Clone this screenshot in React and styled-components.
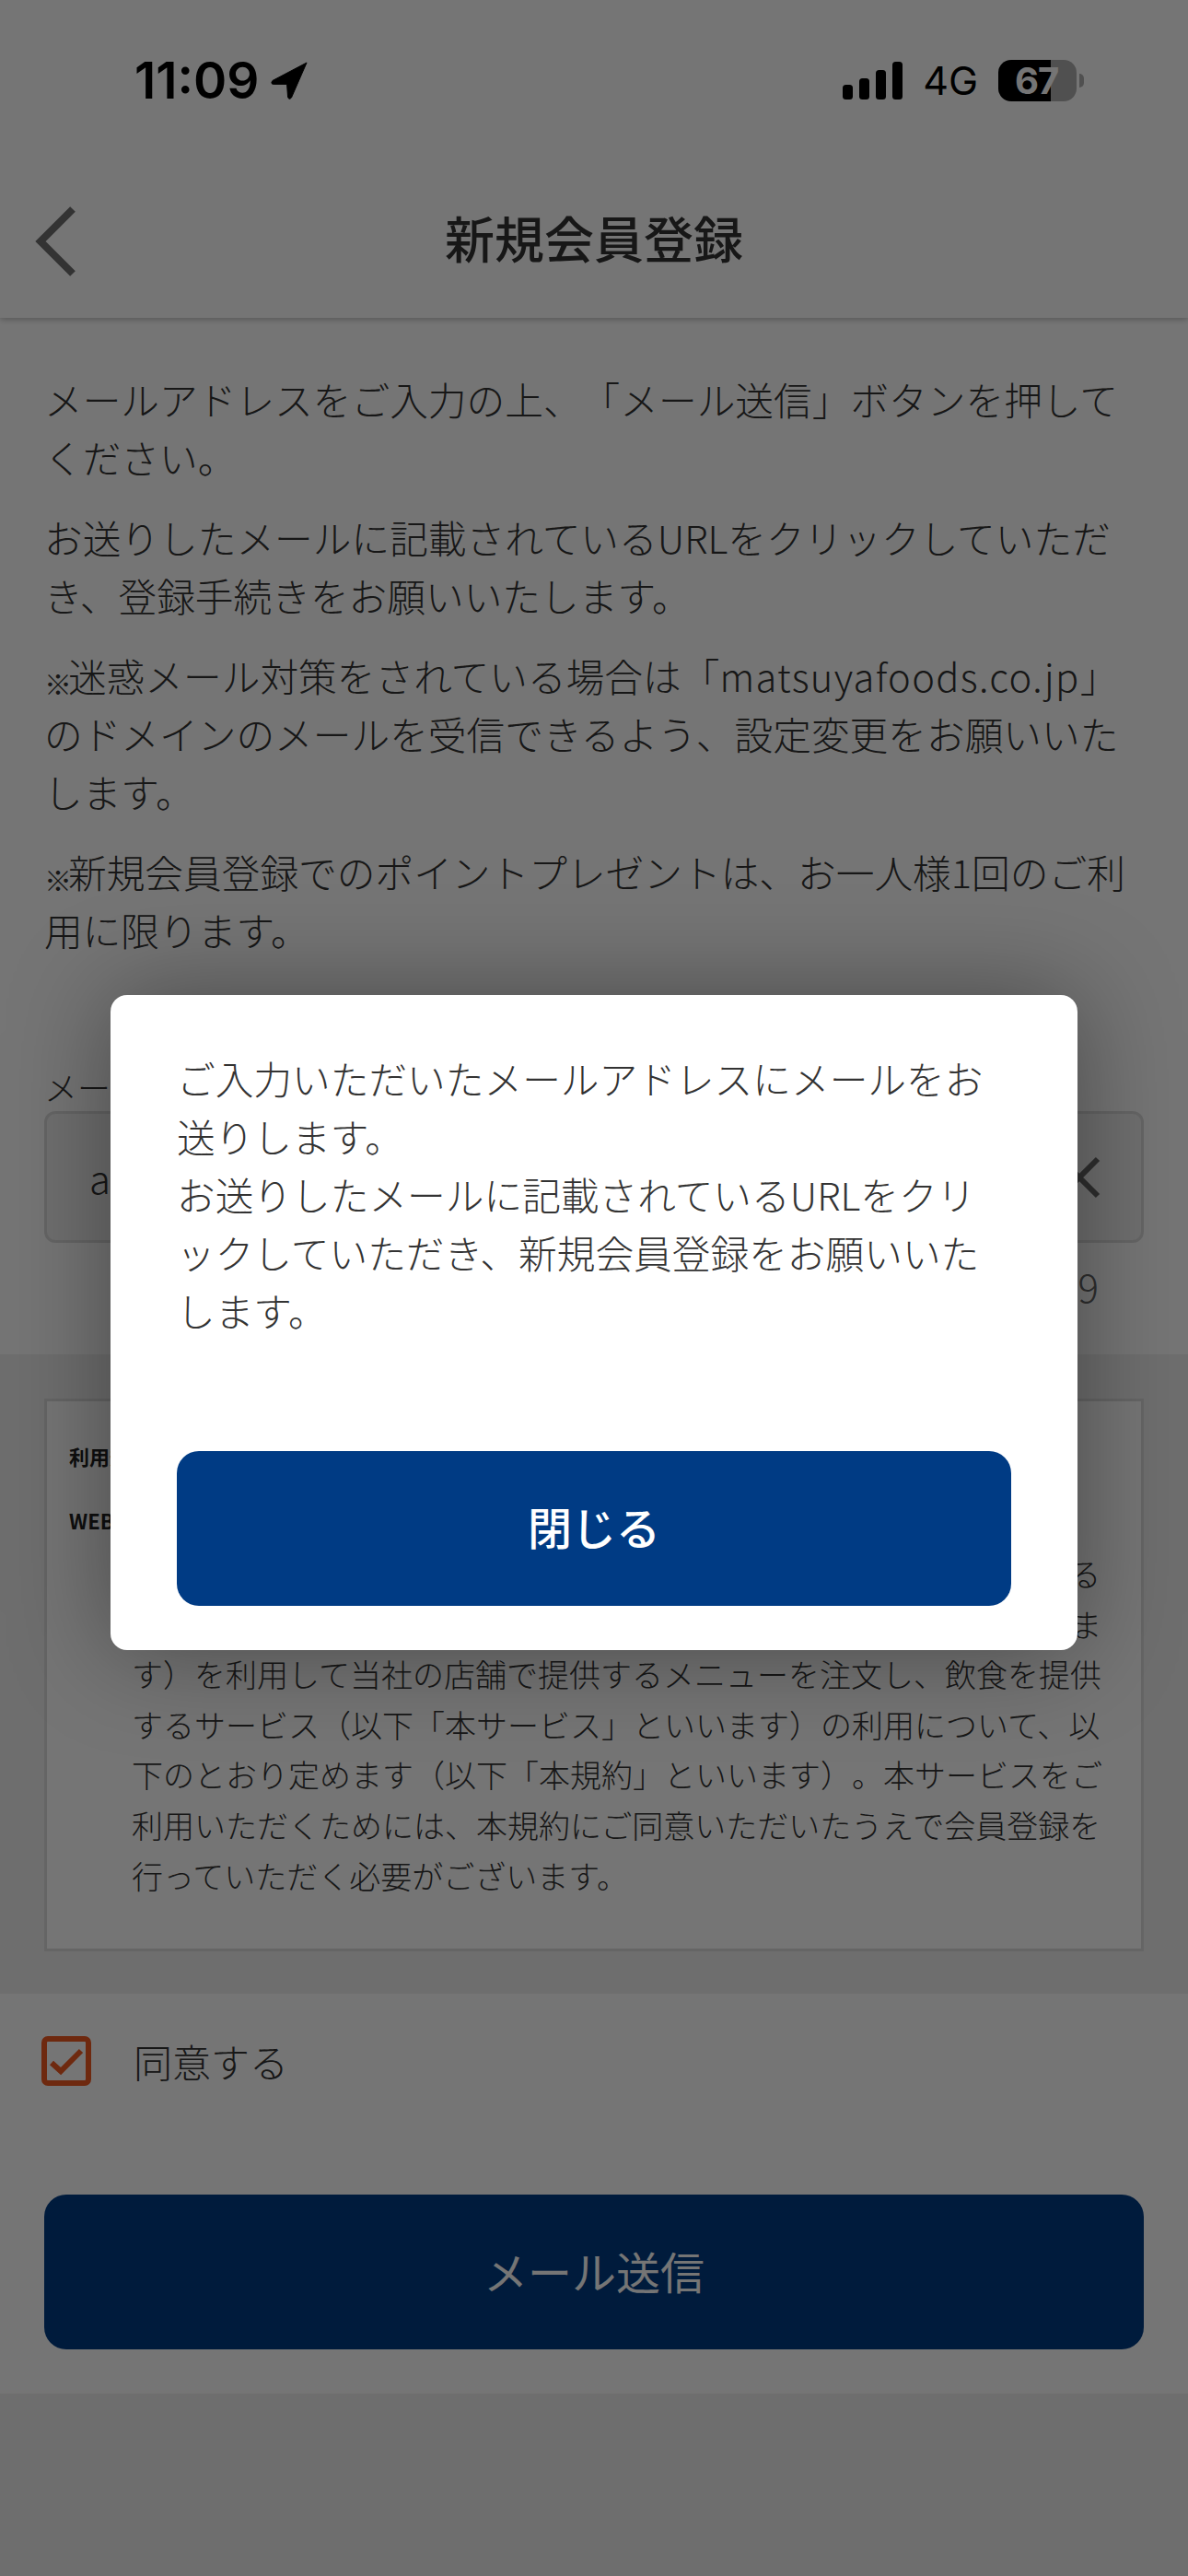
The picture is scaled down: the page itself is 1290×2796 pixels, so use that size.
import React from "react";
import styled, { createGlobalStyle } from "styled-components";

const Global = createGlobalStyle`
  html, body { margin: 0; padding: 0; background: #fff; }
  * { box-sizing: border-box; }
  body { font-family: "Noto Sans CJK JP", "Noto Sans", sans-serif; color: #333; text-spacing-trim: space-all; font-weight: 300; }
`;
const Page = styled.div`position: relative; width: 1290px; height: 2796px; overflow: hidden; background: #fff; display: flex; flex-direction: column;`;
const Head = styled.header`height: 345px; flex: none; padding: 0 40px; display: flex; flex-direction: column; box-shadow: 0 2px 6px rgba(0,0,0,.25); position: relative; background: #fff;`;
const StatusBar = styled.div`height: 172px; padding: 46px 81px 0 106px; display: flex; justify-content: space-between; align-items: flex-start; color: #000;`;
const Time = styled.div`display: flex; align-items: center; gap: 12px; font: 600 55px/82px Inter, "Liberation Sans", sans-serif; letter-spacing: 0;`;
const Indicators = styled.div`display: flex; align-items: center; gap: 22px; height: 82px;`;
const Net = styled.span`font: 400 43px/1 Inter, "Liberation Sans", sans-serif;`;
const Battery = styled.div`position: relative; width: 85px; height: 45px; border-radius: 14px; background: linear-gradient(90deg, #000 0 67%, #aeaeae 67%); font: 700 40px/45px Inter, "Liberation Sans", sans-serif; color: #fff; padding-left: 18px; letter-spacing: -1px;
  &::after { content: ""; position: absolute; left: 88px; top: 15px; width: 5px; height: 15px; border-radius: 0 5px 5px 0; background: #aeaeae; }`;
const NavBar = styled.div`position: relative; display: flex; justify-content: center; padding-top: 45px;`;
const Title = styled.h1`margin: 0; font-size: 54px; line-height: 82px; font-weight: 500; color: #333;`;
const BackIcon = styled.svg`position: absolute; left: -2px; top: 52px;`;
const Intro = styled.section`padding: 57px 48px 0; height: 1125px; flex: none; background: #fff;`;
const Para = styled.p`margin: 0 0 24px; font-size: 41.7px; line-height: 63px; color: #333;`;
const Mark = styled.span`display: inline-block; width: 26px; font-size: 30px; line-height: 1; font-weight: 500; vertical-align: -3px; white-space: nowrap;`;
const Domain = styled.span`letter-spacing: 1.35px;`;
const Label = styled.div`margin-top: 111px; font-size: 36px; line-height: 54px;`;
const Field = styled.div`height: 143px; border: 3px solid #ddd; border-radius: 12px; background: #f1f1f1; padding: 0 44px 0 46px; display: flex; align-items: center; justify-content: space-between; font-size: 42px;`;
const Counter = styled.div`margin-top: 20px; padding-right: 49px; text-align: right; font-size: 42px; line-height: 54px; color: #666;`;
const Terms = styled.section`height: 694px; flex: none; background: #f0f0f0; padding: 48px 48px 46px;`;
const TermsBox = styled.div`height: 600px; border: 3px solid #ddd; background: #fff; padding: 44px 24px 0;`;
const TermsTitle = styled.div`font-size: 22px; line-height: 30px; font-weight: 700; color: #222;`;
const TermsSub = styled(TermsTitle)`margin-top: 40px; margin-bottom: 16px;`;
const TermsBody = styled.div`margin-left: 68px; width: 1060px; font-size: 34px; line-height: 54.6px; color: #333; white-space: pre;`;
const Agree = styled.label`height: 218px; padding: 46px 45px 0; display: flex; align-items: flex-start; gap: 46px; font-size: 42px; line-height: 54px;`;
const Bottom = styled.div`padding: 0 48px; height: 216px;`;
const Submit = styled.div`height: 168px; border-radius: 24px; background: #003b84; display: flex; align-items: center; justify-content: center; color: #fff; font-size: 48px; font-weight: 400; padding-bottom: 5px;`;
const Footer = styled.div`flex: 1; background: #f0f0f0;`;
const Dim = styled.div`position: absolute; inset: 0; background: rgba(0,0,0,.54);`;
const Modal = styled.div`position: absolute; left: 120px; top: 1080px; width: 1050px; height: 711px; background: #fff; border-radius: 18px; padding: 59px 72px 48px; box-shadow: 0 0 110px rgba(0,0,0,.38); display: flex; flex-direction: column; justify-content: space-between;`;
const ModalText = styled.p`margin: 0; font-size: 41.7px; line-height: 63px; color: #333;`;
const CloseBtn = styled.div`height: 168px; border-radius: 24px; background: #003b84; color: #fff; font-size: 48px; font-weight: 500; display: flex; align-items: center; justify-content: center; padding-bottom: 6px;`;

export default function App() {
  return (
    <Page>
      <Global />
      <Head>
        <StatusBar>
          <Time>11:09
            <svg width="41" height="41" viewBox="0 0 42 42"><path d="M40 1 L2 21 Q-1 25 4 25 L18 25 L19 39 Q20 43 23 40 Z" fill="#000" stroke="#000" strokeWidth="1" strokeLinejoin="round"/></svg>
          </Time>
          <Indicators>
            <svg width="65" height="41" viewBox="0 0 65 41"><rect x="0" y="25" width="11" height="16" rx="3.5"/><rect x="18" y="18" width="11" height="23" rx="3.5"/><rect x="36" y="9" width="11" height="32" rx="3.5"/><rect x="54" y="0" width="11" height="41" rx="3.5"/></svg>
            <Net>4G</Net>
            <Battery>67</Battery>
          </Indicators>
        </StatusBar>
        <NavBar>
          <BackIcon width="46" height="76" viewBox="0 0 46 76"><path d="M41 3 L6 38 L41 73" fill="none" stroke="#6f6f6f" strokeWidth="8"/></BackIcon>
          <Title>新規会員登録</Title>
        </NavBar>
      </Head>
      <Intro>
        <Para>メールアドレスをご入力の上、「メール送信」ボタンを押してください。</Para>
        <Para>お送りしたメールに記載されているURLをクリックしていただき、登録手続きをお願いいたします。</Para>
        <Para><Mark>※</Mark>迷惑メール対策をされている場合は「<Domain>matsuyafoods.co.jp</Domain>」のドメインのメールを受信できるよう、設定変更をお願いいたします。</Para>
        <Para><Mark>※</Mark>新規会員登録でのポイントプレゼントは、お一人様1回のご利用に限ります。</Para>
        <Label>メールアドレス</Label>
        <Field><span>a@example.com</span><svg width="46" height="46" viewBox="0 0 46 46"><path d="M3 3 L43 43 M43 3 L3 43" fill="none" stroke="#666" strokeWidth="6"/></svg></Field>
        <Counter>13/2559</Counter>
      </Intro>
      <Terms>
        <TermsBox>
          <TermsTitle>利用規約</TermsTitle>
          <TermsSub>WEBオーダーサービス利用規約</TermsSub>
          <TermsBody>{`松屋フーズ株式会社（以下「当社」といいます）は、当社が提供する
当社ウェブサイト上のオーダーサービス（以下「本アプリ」といいま
す）を利用して当社の店舗で提供するメニューを注文し、飲食を提供
するサービス（以下「本サービス」といいます）の利用について、以
下のとおり定めます（以下「本規約」といいます）。本サービスをご
利用いただくためには、本規約にご同意いただいたうえで会員登録を
行っていただく必要がございます。`}</TermsBody>
        </TermsBox>
      </Terms>
      <Agree>
        <svg width="54" height="54" viewBox="0 0 54 54"><rect x="3" y="3" width="48" height="48" rx="4" fill="none" stroke="#f05a22" strokeWidth="6"/><path d="M11 29 L21 38 L43 16" fill="none" stroke="#f05a22" strokeWidth="6"/></svg>
        同意する
      </Agree>
      <Bottom><Submit>メール送信</Submit></Bottom>
      <Footer />
      <Dim />
      <Modal>
        <ModalText>ご入力いただいたメールアドレスにメールをお送りします。<br/>お送りしたメールに記載されているURLをクリックしていただき、新規会員登録をお願いいたします。</ModalText>
        <CloseBtn>閉じる</CloseBtn>
      </Modal>
    </Page>
  );
}
